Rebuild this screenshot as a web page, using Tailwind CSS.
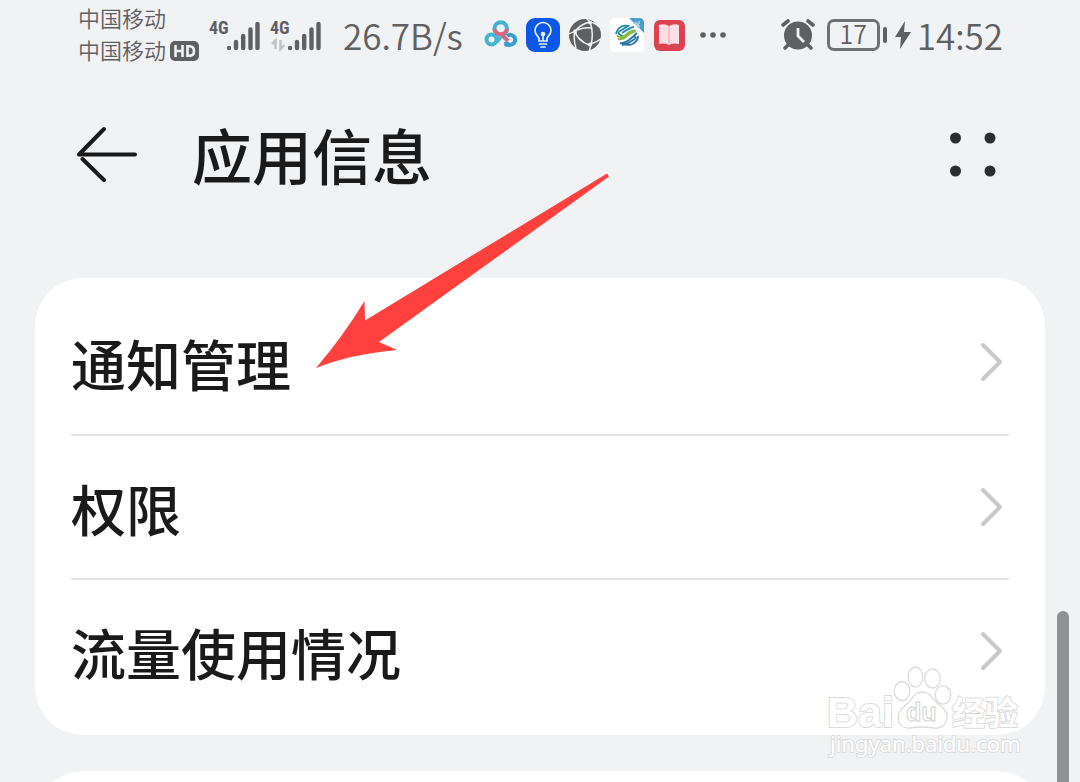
<!DOCTYPE html>
<html lang="zh-CN">
  <head>
    <meta charset="UTF-8" />
    <meta name="viewport" content="width=device-width, initial-scale=1.0" />
    <script src="https://cdn.jsdelivr.net/npm/@tailwindcss/browser@4"></script>
    <title>应用信息</title>
  </head>
  <body
    class="relative h-screen overflow-hidden bg-[#f1f2f4] font-['Noto_Sans_CJK_SC',sans-serif] text-[#1a1a1a]"
  >
    <!-- Status bar -->
    <div class="flex h-[70px] items-center justify-between pr-[77px] pl-[78px] text-[#5f6062]">
      <div class="flex h-full items-center">
        <div class="flex flex-col pb-1 text-[22px] leading-8 font-[350]">
          <span>中国移动</span>
          <div class="flex items-center gap-1">
            <span>中国移动</span>
            <svg class="mt-1 h-5 w-[29px]" viewBox="0 0 29 20">
              <rect width="29" height="20" rx="5" fill="#5f6062" />
              <path d="M5.500 4v12M12.500 4v12M5.500 10h7M17.500 5.200v9.600h2q4.500 0 4.500-4.800t-4.500-4.800z" fill="none" stroke="#f1f2f4" stroke-width="2.600" />
            </svg>
          </div>
        </div>
        <!-- Signal -->
        <div class="ml-2 flex gap-2">
          <svg class="h-[34px] w-[54px]" viewBox="0 0 54 34">
            <text x="2" y="16" font-family="Liberation Sans Narrow, Roboto Condensed, Roboto, sans-serif" font-size="18" font-weight="700" fill="#5f6062">4G</text>
            <path d="M22 30v.1M29 24v6M36.200 18v12M43.500 11.500v18.500M50.500 6v24" stroke="#5f6062" stroke-width="4.400" stroke-linecap="round" />
          </svg>
          <svg class="h-[34px] w-[54px]" viewBox="0 0 54 34">
            <text x="1" y="16" font-family="Liberation Sans Narrow, Roboto Condensed, Roboto, sans-serif" font-size="18" font-weight="700" fill="#5f6062">4G</text>
            <path d="M6.500 31V22.500L3 26M11.500 22v9l4-4" fill="none" stroke="#c0c1c3" stroke-width="2.400" />
            <path d="M21 30v.1M28 24v6M35.200 18v12M42.500 11.500v18.500M49.500 6v24" stroke="#5f6062" stroke-width="4.400" stroke-linecap="round" />
          </svg>
        </div>
        <span class="ml-5 w-[121px] text-[35px] leading-[70px] font-[350] whitespace-nowrap">26.7B/s</span>
        <!-- Notification icons -->
        <div class="ml-5 flex items-center gap-2">
          <svg class="size-[34px]" viewBox="0 0 34 34" fill="none" stroke-width="4">
            <circle cx="16.700" cy="10.500" r="6.300" stroke="#42b3cc" />
            <circle cx="7.500" cy="21.500" r="5" stroke="#42b6d6" />
            <path d="M21.500 23.500a5 5 0 1 0 1.500-5.500M21 25.500q2 2 5 1.500" stroke="#369fc9" />
            <path d="M12 24q2-1 4.500-5" stroke="#42b6d6" />
            <path d="M10.500 11a6.300 6.300 0 0 0 12.400 0" stroke="#e0647c" />
            <path d="M18 17l6 6" stroke="#c9698c" />
          </svg>
          <svg class="size-[34px]" viewBox="0 0 34 34" fill="none" stroke="#e4f0ff" stroke-width="1.700" stroke-linecap="round">
            <rect width="34" height="34" rx="9" fill="#0b57ea" stroke="none" />
            <path d="M13 23v-2.500c0-2-4-3.500-4-8a8 8 0 0 1 16 0c0 4.500-4 6-4 8V23zM13.500 26h7M15 29h4M17 17v5.500" />
            <circle cx="17" cy="16" r="1.500" fill="#e4f0ff" />
          </svg>
          <svg class="size-[34px]" viewBox="0 0 34 34">
            <circle cx="17" cy="17" r="16" fill="#5f6062" />
            <path d="M0 16q4-1 7-3Q13 6 22 4L18 0M9 12q8-3 14-2M22 4q4 10 1 23l-2 7M22 4q6 1 9 5M7 13q2 9 14 14M7 13q-2 8 1 17M23 26q6-2 11-6" fill="none" stroke="#f1f2f4" stroke-width="1.500" />
            <g fill="#f1f2f4">
              <circle cx="22" cy="4.500" r="1.900" />
              <circle cx="7" cy="13.500" r="1.900" />
              <circle cx="22" cy="26.500" r="1.900" />
            </g>
          </svg>
          <svg class="size-[34px]" viewBox="0 0 34 34">
            <rect width="34" height="34" rx="5" fill="#fff" />
            <path d="M19 0h10q5 0 5 5v10z" fill="#4b9fd0" />
            <path d="M25 4l5 5M29 3v3M26 8l3-1" stroke="#c5e4f3" stroke-width="1.200" />
            <g fill="none" stroke-width="1.900">
              <path d="M6 16q1-5 5.500-7.500 3-1.500 6.500-.5l-8 5q-3 2 .5 4l3 1.500M24 9q-3 0-12 6" stroke="#278aaf" />
              <path d="M8 21q5 1 9-3t9-5M7 17.500q3 3 8 0 5-5 10-5" stroke="#8abb45" />
              <path d="M28 18q0 5-5.500 8-3 1.500-6.500.5l8-5q3-2 0-3.500M10 25q4 1 9-3 4-3 8-7M12 27q4 0 8-3" stroke="#2878a5" />
            </g>
          </svg>
          <svg class="size-[34px]" viewBox="0 0 34 34">
            <rect x="2" y="2" width="31" height="31" rx="6" fill="#dc4250" />
            <path d="M7 7q6-2 10 1 5-3 10-1v19q-5-1-8 0-2 2-4 0-4-1-8 0z" fill="#ffdde5" />
            <path d="M17 8v18" stroke="#f4b3c1" stroke-width="1.500" />
          </svg>
        </div>
        <svg class="ml-3 h-2 w-8" viewBox="0 0 32 8" fill="#5f6062">
          <circle cx="5" cy="4" r="2.800" />
          <circle cx="15" cy="4" r="2.800" />
          <circle cx="25" cy="4" r="2.800" />
        </svg>
      </div>
      <div class="flex items-center">
        <svg class="h-8 w-[34px]" viewBox="0 0 34 32">
          <path d="M2 6l5-4M32 6l-5-4" stroke="#5f6062" stroke-width="3.600" stroke-linecap="round" />
          <circle cx="17" cy="16.500" r="14" fill="#5f6062" />
          <path d="M7 26l-3 3M27 26l3 3" stroke="#5f6062" stroke-width="3.600" stroke-linecap="round" />
          <path d="M17 9v8l6 6" fill="none" stroke="#f1f2f4" stroke-width="2.800" />
        </svg>
        <div
          class="ml-3 flex h-8 w-[53px] items-center justify-center rounded-[7px] border-[3px] border-[#707173] pb-1 text-[25px] leading-6 font-[350]"
        >
          17
        </div>
        <div class="ml-[3px] h-4 w-1 rounded-full bg-[#5f6062]"></div>
        <svg class="ml-2 h-7 w-4" viewBox="0 0 16 28">
          <path d="M10 0L0 16h6L5 28 16 11H9z" fill="#5f6062" />
        </svg>
        <span class="ml-1.5 text-[35px] leading-[70px] font-[350]">14:52</span>
      </div>
    </div>

    <!-- Header -->
    <header class="mb-10 flex items-center py-[54px] pr-[83px] pl-[77px]">
      <button type="button" aria-label="返回">
        <svg class="h-14 w-[60px]" viewBox="0 0 60 56" fill="none" stroke="#1a1a1a" stroke-width="4" stroke-linecap="round" stroke-linejoin="round">
          <path d="M27 3L2 28.500h56M5.500 33L27 54" />
        </svg>
      </button>
      <h1 class="ml-[55px] text-[60px] leading-[60px] font-medium">应用信息</h1>
      <button type="button" aria-label="更多" class="ml-auto">
        <svg class="h-12 w-[48px]" viewBox="0 0 48 48" fill="#2b2c2e">
          <circle cx="6.500" cy="8" r="5.500" />
          <circle cx="41" cy="8" r="5.500" />
          <circle cx="6.500" cy="41" r="5.500" />
          <circle cx="41" cy="41" r="5.500" />
        </svg>
      </button>
    </header>

    <!-- Settings list -->
    <main class="flex flex-col gap-9 px-[35px]">
      <nav class="rounded-[48px] bg-white px-9 pt-3 pb-[13px]">
        <ul class="divide-y-2 divide-[#e3e3e3]">
          <li>
            <a href="#" class="flex h-36 items-center justify-between pr-1.5 text-[55px] font-medium">
              通知管理
              <svg class="h-10 w-6" viewBox="0 0 24 40" fill="none" stroke="#c9c9c9" stroke-width="4" stroke-linecap="round" stroke-linejoin="round">
                <path d="M4 3l17 17L4 37" />
              </svg>
            </a>
          </li>
          <li>
            <a href="#" class="flex h-[142px] items-center justify-between pr-1.5 text-[55px] font-medium">
              权限
              <svg class="h-10 w-6" viewBox="0 0 24 40" fill="none" stroke="#c9c9c9" stroke-width="4" stroke-linecap="round" stroke-linejoin="round">
                <path d="M4 3l17 17L4 37" />
              </svg>
            </a>
          </li>
          <li>
            <a href="#" class="flex h-[142px] items-center justify-between pr-1.5 text-[55px] font-medium">
              流量使用情况
              <svg class="h-10 w-6" viewBox="0 0 24 40" fill="none" stroke="#c9c9c9" stroke-width="4" stroke-linecap="round" stroke-linejoin="round">
                <path d="M4 3l17 17L4 37" />
              </svg>
            </a>
          </li>
        </ul>
      </nav>
      <section class="h-36 rounded-[48px] bg-white"></section>
    </main>

    <!-- Scrollbar -->
    <div class="absolute top-[611px] right-[11px] bottom-0 w-3 rounded-t-full bg-[#909193]"></div>

    <!-- Pointer -->
    <svg class="absolute top-[173px] left-[316px] h-[196px] w-[294px]" viewBox="0 0 294 196">
      <path d="M0 195Q28 162 48.500 128L49 147.500 291 0.500 293 3.500 63 169 81 177Q35 181 0 195z" fill="#ff413d" />
    </svg>

    <!-- Watermark -->
    <svg class="absolute right-[55px] bottom-[21px] h-[96px] w-[200px]" viewBox="0 0 200 96" fill="#fff" stroke="#dcdcdc" stroke-width="2">
      <g paint-order="stroke">
        <text x="2" y="62" font-family="Liberation Sans, sans-serif" font-size="43" font-weight="700">Bai</text>
        <text x="127" y="60" font-family="Noto Sans CJK SC, sans-serif" font-size="33" font-weight="700">经验</text>
        <text x="5" y="87" font-family="Noto Sans, sans-serif" font-size="22">jingyan.baidu.com</text>
      </g>
      <g stroke-width="1.300">
        <ellipse cx="77" cy="26" rx="7.800" ry="9.500" />
        <ellipse cx="90.500" cy="12" rx="7.300" ry="10" />
        <ellipse cx="107.500" cy="13.500" rx="7.800" ry="9.500" />
        <ellipse cx="118" cy="30" rx="7.800" ry="9.200" />
        <path d="M97 27c7 0 10 5 14 10 6 5 12 9 11 16-1 8-7 11-13 10q-12-2-24 0c-7 1-12-4-12-10 0-8 6-11 11-16 4-5 6-10 13-10z" />
      </g>
      <text x="81" y="56" font-family="Liberation Sans, sans-serif" font-size="25" font-weight="700" stroke-width="1.300">du</text>
    </svg>
  </body>
</html>
